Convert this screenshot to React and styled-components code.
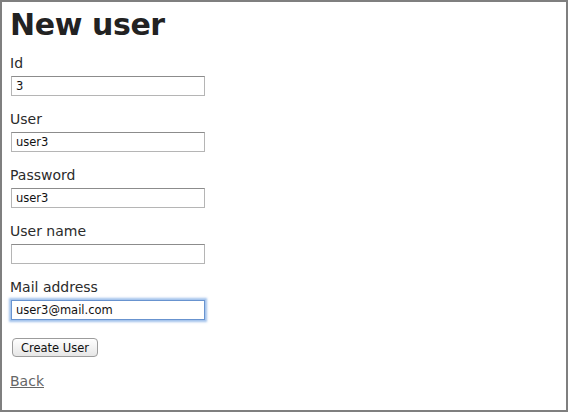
import React from 'react';
import styled, { createGlobalStyle } from 'styled-components';

const Global = createGlobalStyle`
  body {
    margin: 0;
    background: #fff;
    font-family: "DejaVu Sans", Verdana, sans-serif;
  }
`;

const Frame = styled.div`
  box-sizing: border-box;
  width: 568px;
  height: 412px;
  border: 2px solid #7f7f7f;
  padding: 6px 8px;
  background: #fff;
`;

const Title = styled.h1`
  margin: 0 0 12px;
  font-size: 30px;
  line-height: 34px;
  font-weight: bold;
  letter-spacing: -0.4px;
  color: #222;
`;

const Form = styled.form`
  display: flex;
  flex-direction: column;
  align-items: flex-start;
`;

const Field = styled.div`
  display: flex;
  flex-direction: column;
  align-items: flex-start;
  margin-bottom: 14px;
`;

const Label = styled.label`
  font-size: 14px;
  line-height: 18px;
  color: #2b2b2b;
  margin-bottom: 4px;
`;

const Input = styled.input`
  box-sizing: border-box;
  width: 194px;
  height: 20px;
  margin: 0 0 0 1px;
  padding: 0 4px;
  font-family: "DejaVu Sans", Verdana, sans-serif;
  font-size: 11.5px;
  color: #111;
  background: #fff;
  border: 1px solid #b5b5b5;
  border-top-color: #8c8c8c;
  outline: none;
  ${({ focused }) =>
    focused &&
    `
    border-color: #6893cf;
    box-shadow: 0 0 2px 2px rgba(110, 160, 225, 0.65);
  `}
`;

const Button = styled.button`
  box-sizing: border-box;
  width: 86px;
  height: 19px;
  margin: 4px 0 0 2px;
  padding: 0;
  font-family: "DejaVu Sans", Verdana, sans-serif;
  font-size: 11.5px;
  color: #111;
  border: 1px solid #9c9c9c;
  border-radius: 4px;
  background: linear-gradient(#ffffff, #e6e6e6);
`;

const BackLink = styled.a`
  margin-top: 15px;
  font-size: 14px;
  line-height: 18px;
  color: #666;
  text-decoration: underline;
`;

const fields = [
  { label: 'Id', value: '3' },
  { label: 'User', value: 'user3' },
  { label: 'Password', value: 'user3' },
  { label: 'User name', value: '' },
  { label: 'Mail address', value: 'user3@mail.com', focused: true },
];

export default function App() {
  return (
    <>
      <Global />
      <Frame>
        <Title>New user</Title>
        <Form onSubmit={e => e.preventDefault()}>
          {fields.map(f => (
            <Field key={f.label}>
              <Label>{f.label}</Label>
              <Input defaultValue={f.value} focused={f.focused ? 1 : 0} />
            </Field>
          ))}
          <Button type="submit">Create User</Button>
          <BackLink href="#">Back</BackLink>
        </Form>
      </Frame>
    </>
  );
}
